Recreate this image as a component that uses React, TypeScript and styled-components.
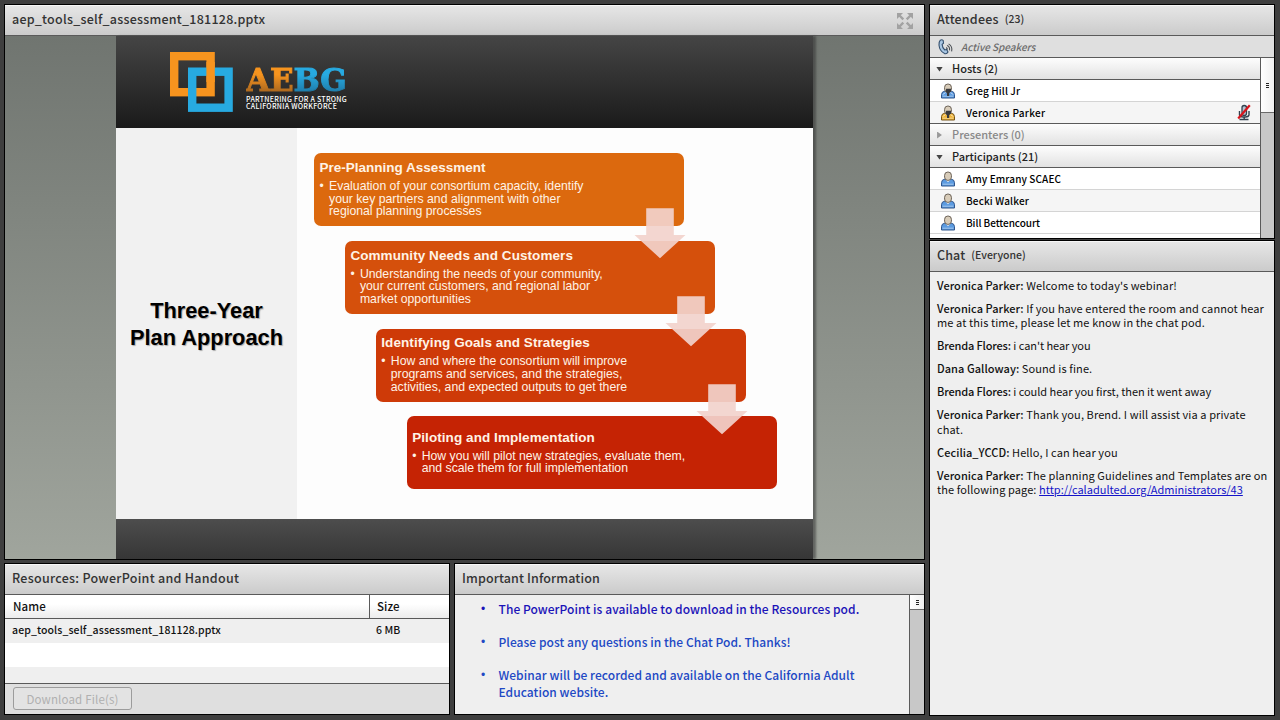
import React from "react";
import styled, { createGlobalStyle, css } from "styled-components";

interface AttendeeProps {
    name: string;
    color: string;
    host?: boolean;
    muted?: boolean;
    spacing?: number;
}

interface ChatMessage {
    author: string;
    text: string;
    link?: string;
    tight?: boolean;
}

interface Step {
    title: string;
    text: string;
    color: string;
}

const hosts: AttendeeProps[] = [
    { name: "Greg Hill Jr", color: "#5c9be0", host: true, spacing: 0.13 },
    { name: "Veronica Parker", color: "#efb53a", host: true, muted: true, spacing: 0.3 },
];

const participants: AttendeeProps[] = [
    { name: "Amy Emrany SCAEC", color: "#5c9be0", spacing: 0.1 },
    { name: "Becki Walker", color: "#5c9be0", spacing: 0.15 },
    { name: "Bill Bettencourt", color: "#5c9be0", spacing: -0.05 },
];

const messages: ChatMessage[] = [
    { author: "Veronica Parker", text: "Welcome to today's webinar!" },
    { author: "Veronica Parker", text: "If you have entered the room and cannot hear\nme at this time, please let me know in the chat pod." },
    { author: "Brenda Flores", text: "i can't hear you", tight: true },
    { author: "Dana Galloway", text: "Sound is fine." },
    { author: "Brenda Flores", text: "i could hear you first, then it went away", tight: true },
    { author: "Veronica Parker", text: "Thank you, Brend. I will assist via a private\nchat." },
    { author: "Cecilia_YCCD", text: "Hello, I can hear you" },
    { author: "Veronica Parker", text: "The planning Guidelines and Templates are on\nthe following page: ", link: "http://caladulted.org/Administrators/43" },
];

const steps: Step[] = [
    {
        title: "Pre-Planning Assessment",
        text: "Evaluation of your consortium capacity, identify\nyour key partners and alignment with other\nregional planning processes",
        color: "#dc690e",
    },
    {
        title: "Community Needs and Customers",
        text: "Understanding the needs of your community,\nyour current customers, and regional labor\nmarket opportunities",
        color: "#d5500c",
    },
    {
        title: "Identifying Goals and Strategies",
        text: "How and where the consortium will improve\nprograms and services, and the strategies,\nactivities, and expected outputs to get there",
        color: "#ce3a08",
    },
    {
        title: "Piloting and Implementation",
        text: "How you will pilot new strategies, evaluate them,\nand scale them for full implementation",
        color: "#c52304",
    },
];

const PersonIcon = ({ color, host }: { color: string; host?: boolean }) => (
    <svg width="16" height="16" viewBox="0 0 16 16">
        <path d="M1.5 15V11.6Q1.7 8.4 4.8 8.2H11.2Q14.3 8.4 14.5 11.6V15Z" fill={color} stroke={host && color === "#efb53a" ? "#76551b" : "#31568c"} />
        <path d="M2.6 13.2h10.8" stroke="#fff" strokeOpacity=".45" />
        <path d="M5.3 8.3L8 11.2L10.7 8.3Z" fill="#eee" />
        <rect x="4.6" y="1" width="6.8" height="8.4" rx="3.3" fill="#d8ccb9" stroke="#6b6257" />
        {host && <path d="M6.2 5.8H11V8.5L9.2 10V13H7V10.2L5.6 8.6Z" fill="#38393d" />}
        {host && <path d="M2.7 11.5L5.6 9.6M13.3 11.5L10.5 9.6" stroke="#fff" strokeOpacity=".6" />}
    </svg>
);

const PhoneIcon = () => (
    <svg width="16" height="16" viewBox="0 0 16 16">
        <path
            d="M2.3 1.2Q4 .2 5.2 1.5L5.5 4.2L4.1 5.4Q4.3 9 6.8 11L8.6 10.5L10 13Q8.9 15.2 6.6 14.6Q1.5 12.1 1 6Q1 2.5 2.3 1.2Z"
            fill="#a9c7e4"
            stroke="#34506f"
            strokeWidth="1.1"
        />
        <path d="M8 8.6Q9.6 9 9.3 10.6M9 6.6Q12.1 7.6 11.5 11.4M10.6 4.9Q14.8 7.4 13.6 12.4" fill="none" stroke="#4c5157" strokeWidth="1.1" />
    </svg>
);

const MutedMicIcon = () => (
    <svg width="14" height="17" viewBox="0 0 14 17">
        <rect x="5" y="1.5" width="4.5" height="10" rx="2.2" fill="#b5c4d0" stroke="#33424f" strokeWidth="1.3" />
        <path d="M2.5 7V11Q3 13 6 13H8.5Q11.5 13 12 11V7M7.2 13V15M2.5 15.5H11.5" fill="none" stroke="#33424f" strokeWidth="1.4" />
        <path d="M1.2 14.5L12.8 1.2" stroke="#d8141c" strokeWidth="2.2" />
    </svg>
);

const ExpandIcon = () => (
    <svg width="16" height="16" viewBox="0 0 16 16" fill="#a2a2a2" stroke="#a2a2a2" strokeWidth="2.4">
        <path d="M0 0H6L0 6ZM16 0V6L10 0ZM0 16V10L6 16ZM16 16H10L16 10Z" stroke="none" />
        <path d="M2 2L6.3 6.3M14 2L9.7 6.3M2 14L6.3 9.7M14 14L9.7 9.7" />
    </svg>
);

const SquaresLogo = () => (
    <svg width="64" height="61" viewBox="0 0 64 61" fill="none" strokeWidth="8.4">
        <rect x="4.2" y="4.2" width="36.4" height="36" stroke="#f7941e" />
        <rect x="22.2" y="19.7" width="36.4" height="36" stroke="#27aae1" />
        <path d="M40.6 10V30" stroke="#f7941e" />
    </svg>
);

const DownArrow = () => (
    <svg width="52" height="52" viewBox="0 0 52 52">
        <path d="M12.2.3H39.8V27H51.5L26 50.2L.5 27H12.2Z" fill="#f2d2cc" fillOpacity=".92" />
    </svg>
);

const Attendee = ({ name, color, host, muted, spacing }: AttendeeProps) => (
    <AttendeeRow $spacing={spacing}>
        <PersonIcon color={color} host={host} />
        <span>{name}</span>
        {muted && <MutedMicIcon />}
    </AttendeeRow>
);

const App = () => {
    return (
        <>
            <GlobalStyle />
            <Room>
                <MainColumn>
                    <Pod>
                        <PodHeader $grow>
                            <FileTitle>aep_tools_self_assessment_181128.pptx</FileTitle>
                            <ExpandIcon />
                        </PodHeader>
                        <Stage>
                            <Slide>
                                <SlideHeader>
                                    <SquaresLogo />
                                    <Brand>
                                        <BrandName><BrandOrange>AE</BrandOrange><BrandBlue>BG</BrandBlue></BrandName>
                                        <BrandTag>PARTNERING FOR A STRONG</BrandTag>
                                        <BrandTag $narrow>CALIFORNIA WORKFORCE</BrandTag>
                                    </Brand>
                                </SlideHeader>
                                <SlideBody>
                                    <SlideSide>Three-Year<br />Plan Approach</SlideSide>
                                    <StepList>
                                        {steps.map((step, i) => (
                                            <StepBox key={step.title} $index={i} $color={step.color}>
                                                <StepTitle $wide={i > 0}>{step.title}</StepTitle>
                                                <StepText><span>•</span><p>{step.text}</p></StepText>
                                                {i < steps.length - 1 && <ArrowHolder><DownArrow /></ArrowHolder>}
                                            </StepBox>
                                        ))}
                                    </StepList>
                                </SlideBody>
                                <SlideFooter />
                            </Slide>
                        </Stage>
                    </Pod>

                    <BottomPods>
                        <Pod>
                            <PodHeader>
                                <PodTitle $spacing={0.28}>Resources: PowerPoint and Handout</PodTitle>
                            </PodHeader>
                            <TableHead>
                                <span>Name</span>
                                <span>Size</span>
                            </TableHead>
                            <TableRow $shaded>
                                <span>aep_tools_self_assessment_181128.pptx</span>
                                <span>6 MB</span>
                            </TableRow>
                            <TableRow />
                            <TableRow $shaded $last />
                            <PodFooter>
                                <DownloadButton disabled>Download File(s)</DownloadButton>
                            </PodFooter>
                        </Pod>

                        <Pod>
                            <PodHeader>
                                <PodTitle $spacing={0.13}>Important Information</PodTitle>
                            </PodHeader>
                            <ScrollArea>
                                <NoteList>
                                    <Note $dark>The PowerPoint is available to download in the Resources pod.</Note>
                                    <Note>Please post any questions in the Chat Pod. Thanks!</Note>
                                    <Note>{"Webinar will be recorded and available on the California Adult\nEducation website."}</Note>
                                </NoteList>
                                <Scrollbar $wide>
                                    <Thumb $height={15}><Grip /></Thumb>
                                </Scrollbar>
                            </ScrollArea>
                        </Pod>
                    </BottomPods>
                </MainColumn>

                <SideColumn>
                    <Pod>
                        <PodHeader>
                            <PodTitle $spacing={0.2}>Attendees</PodTitle>
                            <PodCount>(23)</PodCount>
                        </PodHeader>
                        <SpeakersBar>
                            <PhoneIcon />
                            <em>Active Speakers</em>
                        </SpeakersBar>
                        <ScrollArea>
                            <AttendeeList>
                                <GroupHeader><Triangle />Hosts (2)</GroupHeader>
                                {hosts.map((person) => <Attendee key={person.name} {...person} />)}
                                <GroupHeader $empty><Triangle $closed />Presenters (0)</GroupHeader>
                                <GroupHeader><Triangle />Participants (21)</GroupHeader>
                                {participants.map((person) => <Attendee key={person.name} {...person} />)}
                            </AttendeeList>
                            <Scrollbar>
                                <Thumb $height={55}><Grip /></Thumb>
                            </Scrollbar>
                        </ScrollArea>
                    </Pod>

                    <Pod>
                        <PodHeader>
                            <PodTitle $spacing={0.14}>Chat</PodTitle>
                            <PodCount>(Everyone)</PodCount>
                        </PodHeader>
                        <ChatLog>
                            {messages.map((message, i) => (
                                <Message key={i} $tight={message.tight}>
                                    <b>{message.author}:</b> {message.text}
                                    {message.link && <a href="#">{message.link}</a>}
                                </Message>
                            ))}
                        </ChatLog>
                    </Pod>
                </SideColumn>
            </Room>
        </>
    );
};

const GlobalStyle = createGlobalStyle`
    * {
        box-sizing: border-box;
    }

    body {
        margin: 0;
        overflow: hidden;
        background: #3f3f3f;
        font-family: "Noto Sans CJK SC", "Open Sans", sans-serif;
        color: #111;
    }

    p {
        margin: 0;
    }

    svg {
        display: block;
        flex-shrink: 0;
    }
`;

const Room = styled.main`
    display: grid;
    grid-template-columns: 921px 346px;
    gap: 4px;
    width: 1280px;
    height: 720px;
    padding: 4px;
    background: #3f3f3f;
`;

const MainColumn = styled.div`
    display: grid;
    grid-template-rows: 556px 152px;
    gap: 3px;
`;

const SideColumn = styled.div`
    display: grid;
    grid-template-rows: 235px 476px;
    gap: 1px;
`;

const BottomPods = styled.div`
    display: grid;
    grid-template-columns: 446px 471px;
    gap: 4px;
`;

const Pod = styled.section`
    display: flex;
    flex-direction: column;
    min-height: 0;
    overflow: hidden;
    border: 1px solid #000;
    background: #efefef;
`;

const PodHeader = styled.header<{ $grow?: boolean }>`
    display: flex;
    align-items: center;
    flex-shrink: 0;
    justify-content: ${props => props.$grow ? 'space-between' : 'flex-start'};
    height: 31px;
    padding: 0 ${props => props.$grow ? '11px' : '7px'} 0 7px;
    border-top: 1px solid #f7f7f7;
    border-bottom: 1px solid #5a5a5a;
    background: linear-gradient(#e6e6e6, #cbcbcb);
    white-space: nowrap;
`;

const PodTitle = styled.h2<{ $spacing?: number }>`
    margin: 0 0 3px;
    font-size: 12.5px;
    font-weight: 500;
    line-height: 18px;
    letter-spacing: ${props => props.$spacing ?? 0}px;
    color: #333;
`;

const FileTitle = styled(PodTitle)`
    letter-spacing: 0.24px;
`;

const PodCount = styled.span`
    margin: 0 0 3px 6px;
    font-size: 10.5px;
    font-weight: 500;
    line-height: 18px;
    letter-spacing: 0;
    color: #333;
`;

const Stage = styled.div`
    display: flex;
    flex: 1;
    padding-left: 111px;
    background: linear-gradient(#707570, #a0a59d);
`;

const Slide = styled.article`
    display: flex;
    flex-direction: column;
    width: 697px;
    box-shadow: 3px 0 2px rgba(50, 50, 50, 0.55);
    font-family: "Liberation Sans", Arial, sans-serif;
`;

const SlideHeader = styled.div`
    display: flex;
    height: 92px;
    padding: 16px 0 0 54px;
    background: linear-gradient(#454545, #1a1a1a);
`;

const Brand = styled.div`
    margin: 11px 0 0 12px;
    color: #fff;
`;

const BrandName = styled.div`
    height: 32.5px;
    font-family: "DejaVu Serif", serif;
    font-size: 31px;
    font-weight: 700;
    line-height: 35px;
    letter-spacing: -0.1px;
`;

const gradientText = css`
    background-clip: text;
    -webkit-background-clip: text;
    -webkit-text-stroke: 1px transparent;
    color: transparent;
`;

const BrandOrange = styled.span`
    background-image: linear-gradient(#f7941e 35%, #a8661f 85%);
    ${gradientText}
`;

const BrandBlue = styled.span`
    background-image: linear-gradient(#27aae1 35%, #1f7ba8 85%);
    ${gradientText}
`;

const BrandTag = styled.div<{ $narrow?: boolean }>`
    font-family: "Noto Sans CJK SC", sans-serif;
    font-size: 7px;
    font-weight: 500;
    line-height: 7.5px;
    letter-spacing: ${props => props.$narrow ? '0.3px' : '0.28px'};
    white-space: nowrap;
`;

const SlideBody = styled.div`
    display: flex;
    height: 391px;
    background: #fdfdfd;
`;

const SlideSide = styled.h1`
    display: flex;
    align-items: center;
    justify-content: center;
    width: 181px;
    margin: 0;
    padding-top: 2px;
    background: #f1f1f1;
    color: #000;
    font-size: 21.8px;
    line-height: 26.4px;
    text-align: center;
    text-shadow: 1px 1px 1px rgba(0, 0, 0, 0.3);
`;

const StepList = styled.div`
    display: flex;
    flex-direction: column;
    gap: 14.8px;
    padding: 25px 0 0 17px;
`;

const StepBox = styled.div<{ $index: number; $color: string }>`
    display: flex;
    flex-direction: column;
    justify-content: center;
    position: relative;
    width: 370px;
    height: 73px;
    margin-left: ${props => props.$index * 30.9}px;
    padding: 0 0 1px 5.5px;
    border-radius: 7px;
    background: ${props => props.$color};
    color: #fff3e6;
`;

const StepTitle = styled.h3<{ $wide?: boolean }>`
    margin: 0 0 4px;
    font-size: 13.5px;
    line-height: 16px;
    letter-spacing: ${props => props.$wide ? '0.07px' : '0'};
`;

const StepText = styled.div`
    display: flex;
    font-size: 12.25px;
    line-height: 12.8px;
    white-space: pre;

    span {
        width: 9.5px;
        font-size: 12px;
    }
`;

const ArrowHolder = styled.div`
    position: absolute;
    z-index: 1;
    left: 320px;
    top: 55px;
`;

const SlideFooter = styled.div`
    flex: 1;
    background: linear-gradient(#4d4d4d, #363636);
`;

const columns = css`
    display: grid;
    grid-template-columns: 364px 1fr;

    span {
        display: flex;
        align-items: center;
        padding-left: 7px;
    }
`;

const TableHead = styled.div`
    ${columns}
    height: 24px;
    flex-shrink: 0;
    border-bottom: 1px solid #5a5a5a;
    background: linear-gradient(#fff 40%, #ececec);
    font-size: 11.5px;
    font-weight: 500;
    letter-spacing: 0.1px;

    span {
        padding: 0 0 1px 8px;
    }

    span + span {
        padding-left: 7px;
        border-left: 1px solid #5a5a5a;
    }
`;

const TableRow = styled.div<{ $shaded?: boolean; $last?: boolean }>`
    ${columns}
    flex-shrink: 0;
    height: ${props => props.$last ? 16 : 24}px;
    padding-bottom: 3px;
    background: ${props => props.$shaded ? '#efefef' : '#fff'};
    font-size: 10.5px;
    font-weight: 500;
    line-height: 16px;
    letter-spacing: 0.1px;
`;

const PodFooter = styled.footer`
    display: flex;
    align-items: flex-start;
    flex: 1;
    padding: 3px 8px;
    border-top: 1px solid #5a5a5a;
    background: #dfdfdf;
`;

const DownloadButton = styled.button`
    width: 119px;
    height: 23px;
    padding: 0;
    border: 1px solid #9c9c9c;
    border-radius: 3px;
    background: #e3e3e3;
    color: #b0b0b0;
    font-family: inherit;
    font-size: 11.5px;
    line-height: 20px;
    letter-spacing: 0.16px;
`;

const ScrollArea = styled.div`
    display: flex;
    flex: 1;
    min-height: 0;
    overflow: hidden;
`;

const Scrollbar = styled.div<{ $wide?: boolean }>`
    width: ${props => props.$wide ? 15 : 14}px;
    border-left: 1px solid #5a5a5a;
    background: #c8c8c8;
`;

const Thumb = styled.div<{ $height: number }>`
    display: flex;
    align-items: center;
    justify-content: center;
    height: ${props => props.$height}px;
    border-bottom: 1px solid #6a6a6a;
    background: linear-gradient(90deg, #fff, #f0f0f0);
`;

const Grip = styled.i`
    width: 3px;
    height: 5px;
    background: repeating-linear-gradient(#222 0 1px, transparent 1px 2px);
`;

const NoteList = styled.ul`
    flex: 1;
    margin: 0;
    padding: 6px 0 0 26px;
    list-style: none;
    font-size: 12px;
    font-weight: 500;
    line-height: 16.5px;
    letter-spacing: 0.05px;
`;

const Note = styled.li<{ $dark?: boolean }>`
    display: flex;
    margin-bottom: 16px;
    color: ${props => props.$dark ? '#1b13b8' : '#2148c4'};
    white-space: pre;

    &::before {
        content: "•";
        width: 17.5px;
        font-family: "Liberation Sans", sans-serif;
        font-size: 12px;
        line-height: 17px;
    }
`;

const SpeakersBar = styled.div`
    display: flex;
    align-items: center;
    gap: 7px;
    flex-shrink: 0;
    height: 22px;
    padding-left: 8px;
    border-bottom: 1px solid #5a5a5a;
    background: #dfdfdf;
    color: #6c6c6c;
    font-size: 10px;
    font-weight: 500;
    line-height: 16px;
    letter-spacing: -0.05px;
`;

const AttendeeList = styled.div`
    flex: 1;
    background: #fff;
`;

const GroupHeader = styled.div<{ $empty?: boolean }>`
    display: flex;
    align-items: center;
    gap: 9px;
    height: 22px;
    padding: 0 0 1px 6px;
    border-bottom: 1px solid #5a5a5a;
    background: linear-gradient(#fdfdfd, #e2e2e2);
    color: ${props => props.$empty ? '#888' : '#222'};
    font-size: 11px;
    font-weight: 500;
    line-height: 16px;
`;

const Triangle = styled.i<{ $closed?: boolean }>`
    width: 7px;
    height: ${props => props.$closed ? 7 : 5}px;
    margin-top: 2px;
    background: ${props => props.$closed ? '#999' : '#444'};
    clip-path: ${props => props.$closed ? 'polygon(15% 0, 85% 50%, 15% 100%)' : 'polygon(0 0, 100% 0, 50% 100%)'};
`;

const AttendeeRow = styled.div<{ $spacing?: number }>`
    display: flex;
    align-items: center;
    height: 22px;
    padding: 0 9px 0 10px;
    border-bottom: 1px solid #d4d4d4;
    background: #fff;
    color: #000;
    font-size: 10px;
    font-weight: 500;
    line-height: 16px;
    letter-spacing: ${props => props.$spacing ?? 0}px;

    &:nth-of-type(3),
    &:nth-of-type(7) {
        background: #f5f5f5;
    }

    &:nth-of-type(3) {
        border-color: #5a5a5a;
    }

    span {
        flex: 1;
        margin-left: 10px;
    }
`;

const ChatLog = styled.div`
    padding: 6px 0 0 7px;
    font-size: 11px;
    line-height: 14.2px;
    letter-spacing: 0.1px;
`;

const Message = styled.p<{ $tight?: boolean }>`
    margin-bottom: 8.85px;
    letter-spacing: ${props => props.$tight ? '-0.05px' : '0.1px'};
    white-space: pre;

    b {
        font-weight: 500;
        letter-spacing: ${props => props.$tight ? '-0.15px' : '0.05px'};
    }

    a {
        color: #1414c8;
        letter-spacing: 0;
    }
`;

export default App;
